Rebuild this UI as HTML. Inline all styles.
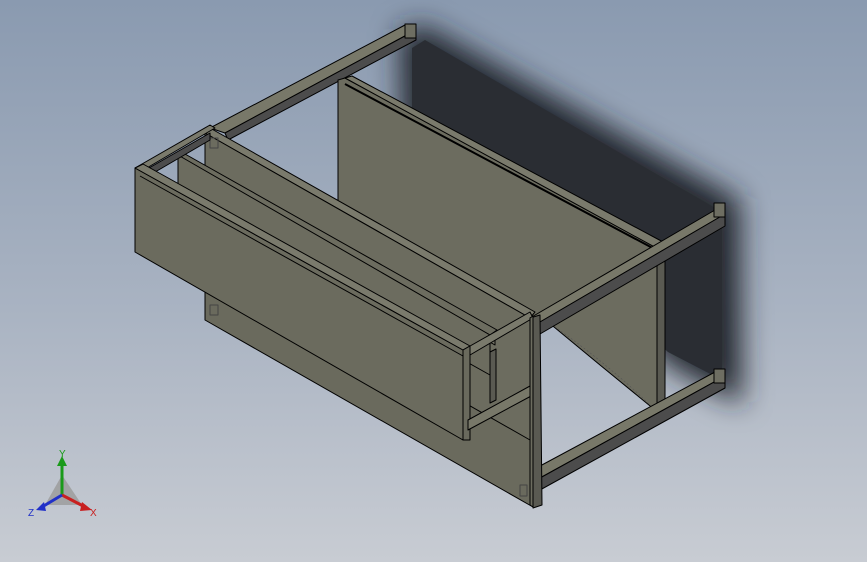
<!DOCTYPE html>
<html><head><style>
html,body{margin:0;padding:0;}
body{width:867px;height:562px;overflow:hidden;background:linear-gradient(#8a9ab0 0%,#a9b3c2 55%,#c8ccd3 100%);}
svg{position:absolute;left:0;top:0;}
text{font-family:"Liberation Sans",sans-serif;font-size:10px;}
</style></head><body>
<svg width="867" height="562" viewBox="0 0 867 562">
<defs><filter id="b" x="-30%" y="-30%" width="160%" height="160%"><feGaussianBlur stdDeviation="14"/></filter></defs>
<polygon points="400,30 425,26 740,200 742,405 668,365 610,300 402,150" fill="#24272d" filter="url(#b)"/>
<polygon points="412,48 425,40 722,212 722,380 668,352 610,300 412,132" fill="#2a2d33"/>
<g stroke="#000" stroke-width="1" stroke-linejoin="round">
<polygon points="210,128 405,25 416,30 225,133" fill="#787869"/>
<polygon points="225,133 416,30 416,40 228,140" fill="#4c4c4c"/>
<rect x="405" y="24" width="11" height="14" fill="#6e6e62"/>
<!-- back panel -->
<polygon points="338,80 345,78 665,250 665,415 655,410 600,365 548,322 540,330 338,330" fill="#6c6c5f"/>
<path d="M548,322 Q610,365 655,410" fill="none" stroke="#555" stroke-width="0.6" stroke-dasharray="2,2"/>
<polygon points="345,78 352,76 665,243 660,250" fill="#7a7a6c"/>
<line x1="345" y1="84" x2="660" y2="252" stroke-width="2"/>
<polygon points="657,255 665,250 665,413 657,418" fill="#5a5a52"/>
<polygon points="530,318 715,210 725,214 540,322" fill="#787869"/>
<polygon points="540,322 725,214 725,226 540,334" fill="#4c4c4c"/>
<rect x="714" y="203" width="11" height="14" fill="#6e6e62"/>
<polygon points="540,466 715,372 725,376 540,478" fill="#787869"/>
<polygon points="540,478 725,376 725,388 540,490" fill="#4c4c4c"/>
<rect x="714" y="369" width="11" height="14" fill="#6e6e62"/>
<polygon points="210,128 535,312 530,318 205,133" fill="#7a7a6c"/>
<polygon points="205,240 533,420 533,507 205,320" fill="#6a6a5d"/>
<rect x="210" y="305" width="8" height="10" fill="none" stroke="#444"/>
<rect x="520" y="485" width="7" height="11" fill="none" stroke="#444"/>
<polygon points="205,133 530,318 530,440 205,255" fill="#6c6c5f"/>
<rect x="210" y="138" width="8" height="10" fill="none" stroke="#444"/>
<polygon points="178,152 495,330 495,345 178,167" fill="#777769"/>
<polygon points="178,158 185,154 497,330 490,335" fill="#6c6c5f"/>
<polygon points="178,155 178,200 490,375 490,335" fill="#6c6c5f"/>
<polygon points="135,168 210,125 215,128 140,172" fill="#7a7a6c"/>
<polygon points="142,172 210,133 210,140 150,175" fill="#4c4c4c"/>
<polygon points="135,168 463,350 463,440 135,252" fill="#6b6b5e"/>
<polygon points="135,168 143,164 470,346 463,350" fill="#7a7a6c"/>
<line x1="140" y1="176" x2="463" y2="356" stroke-width="1"/>
<polygon points="463,350 530,312 533,318 470,355" fill="#7a7a6c"/>
<polygon points="463,350 470,346 470,440 463,440" fill="#6a6a5d"/>
<polygon points="490,352 496,349 496,400 490,403" fill="#5a5a52"/>
<polygon points="468,420 530,386 533,395 468,430" fill="#787869"/>
<polygon points="530,318 540,315 542,505 533,508" fill="#5a5a52"/>
<polygon points="530,318 533,316 533,507 530,505" fill="#6c6c5f"/>
</g>
<g>
<path d="M45,505 L62,475 L82,505 Z" fill="#9a9a9a" opacity="0.8"/>
<line x1="62" y1="495" x2="62" y2="462" stroke="#1a9a1a" stroke-width="3"/>
<polygon points="57,466 62,456 67,466" fill="#1a9a1a"/>
<line x1="62" y1="495" x2="85" y2="507" stroke="#c82020" stroke-width="3"/>
<polygon points="82,502 92,510 80,511" fill="#c82020"/>
<line x1="62" y1="495" x2="42" y2="507" stroke="#2030c8" stroke-width="3"/>
<polygon points="44,502 36,510 46,511" fill="#2030c8"/>
<text x="59" y="457" fill="#1a9a1a">Y</text>
<text x="90" y="516" fill="#c82020">X</text>
<text x="28" y="516" fill="#2030c8">Z</text>
</g>
</svg>
</body></html>
